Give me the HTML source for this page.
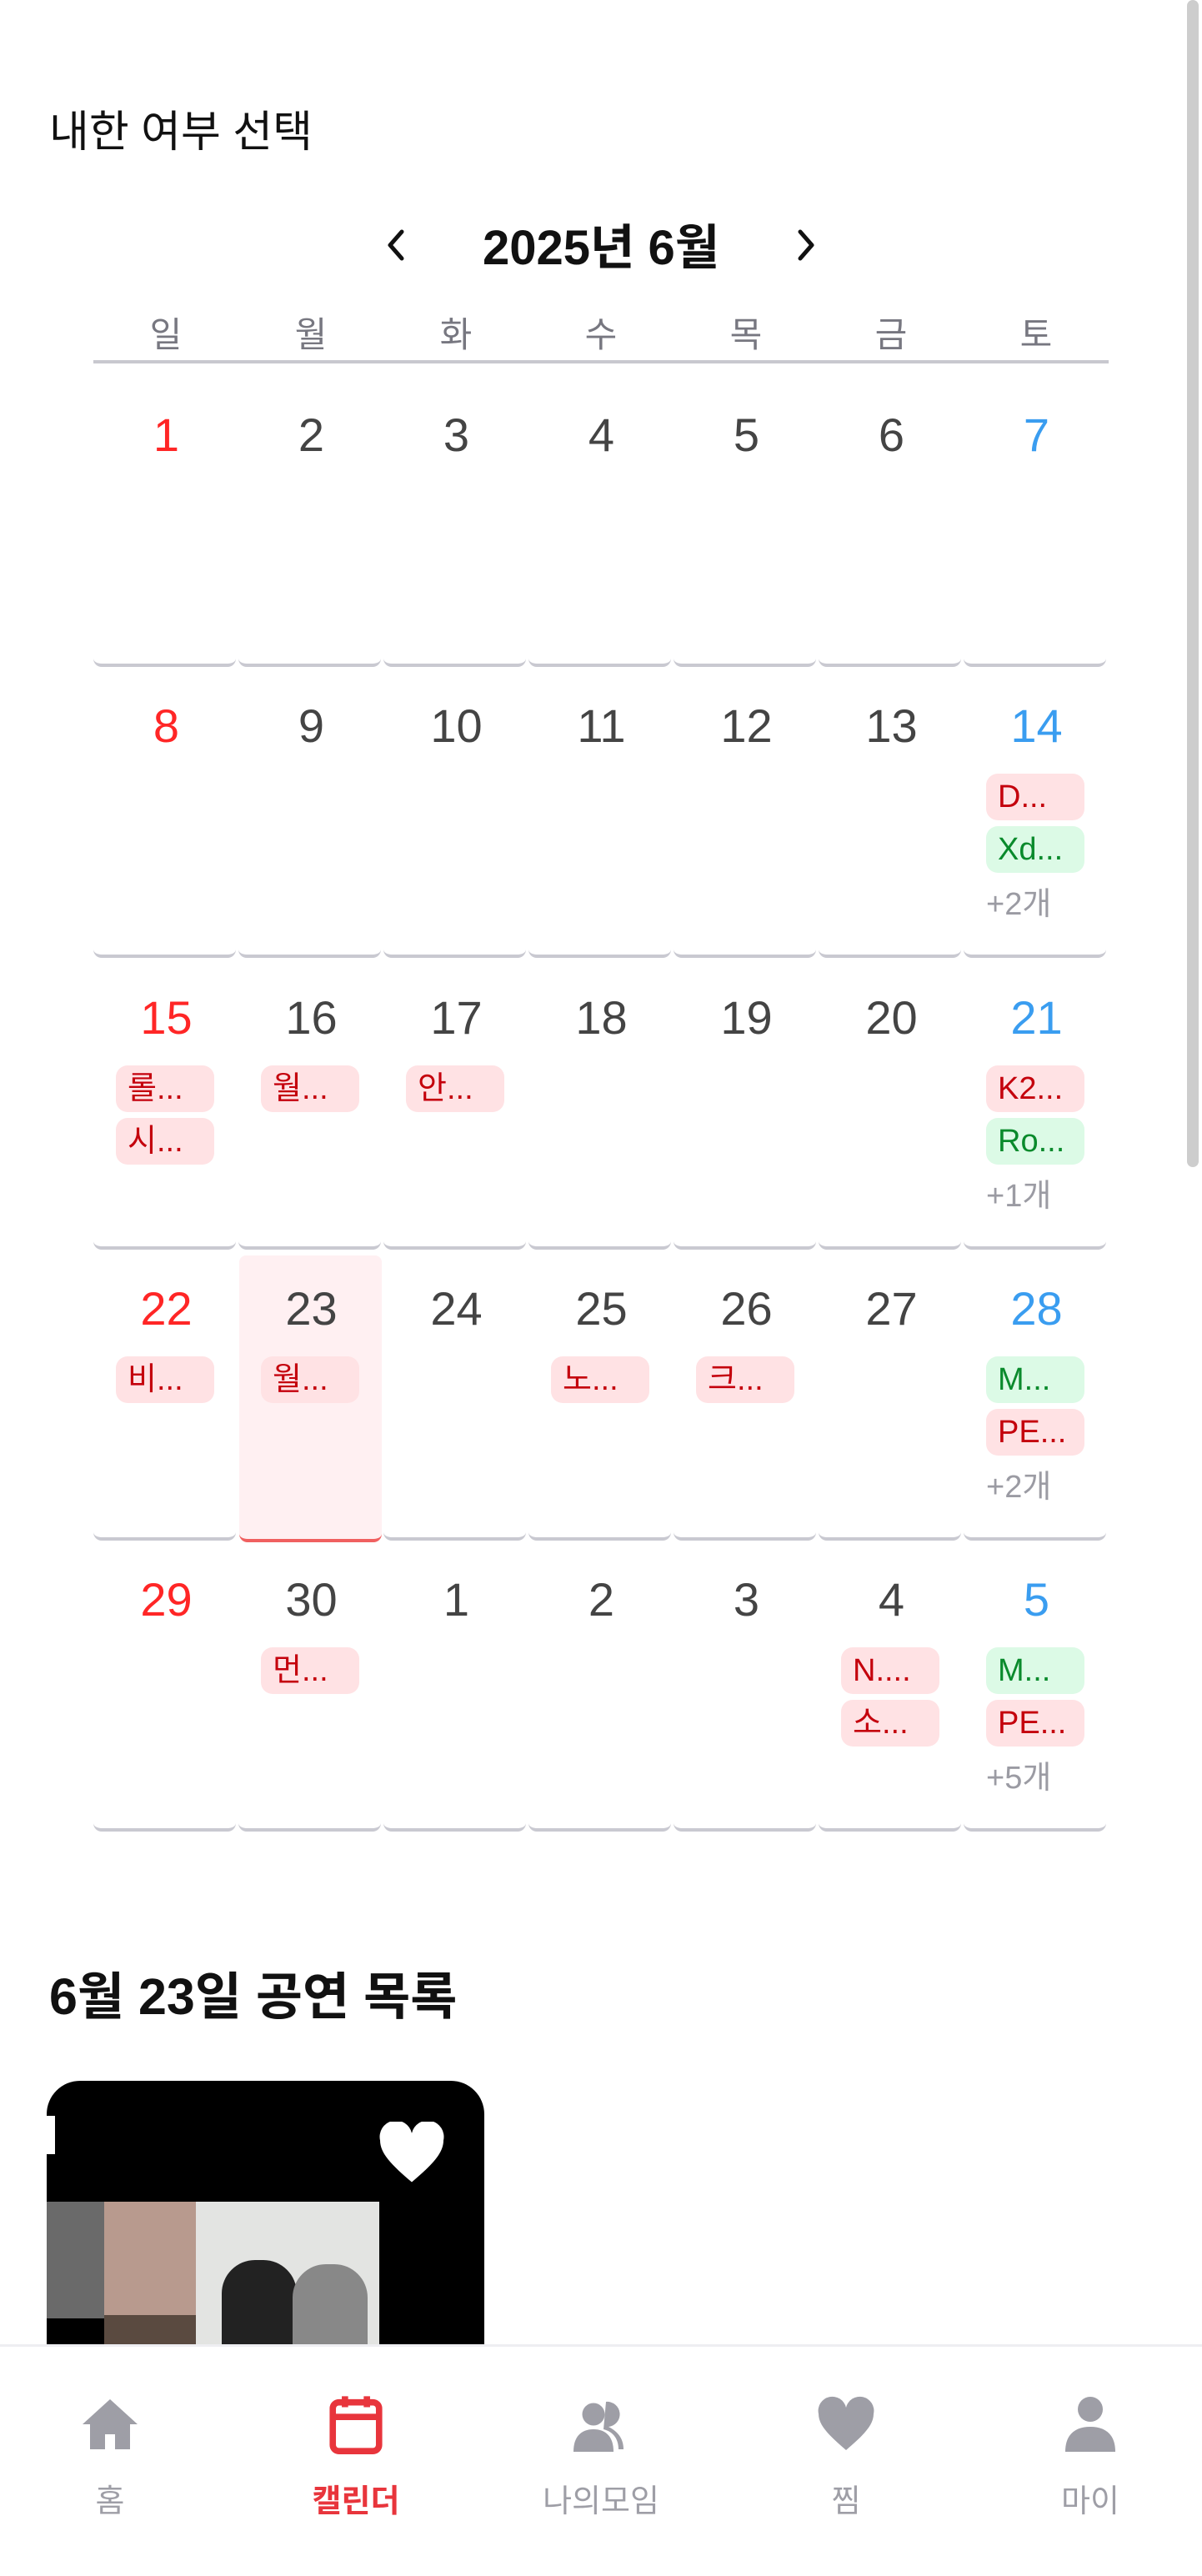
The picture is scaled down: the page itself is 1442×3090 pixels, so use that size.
<!DOCTYPE html>
<html><head><meta charset="utf-8"><style>
*{margin:0;padding:0;box-sizing:border-box}
body{width:1442px;height:3090px;background:#fff;position:relative;overflow:hidden;font-family:"Liberation Sans","Noto Sans CJK KR",sans-serif}
.a{position:absolute}
.title{left:59px;top:116px;font-size:52px;color:#111}
.month{left:0;width:1442px;top:250px;text-align:center;font-size:58px;font-weight:bold;color:#111}
.wd{top:368px;width:174px;text-align:center;font-size:42px;color:#777780}
.cell{width:171px;border-bottom:4px solid #c9c9d1;border-radius:0 0 10px 10px}
.num{width:171px;text-align:center;font-size:56px;color:#444;line-height:60px}
.r{color:#ff2626}.b{color:#3a9df0}
.chip{width:118px;height:56px;border-radius:14px;font-size:38px;line-height:56px;padding-left:14px;white-space:nowrap;overflow:hidden}
.cr{background:#ffe2e4;color:#c4000c}.cg{background:#dcfae6;color:#0a8a2c}
.more{font-size:38px;color:#9b9ba3;line-height:44px}
.nav{top:2812px;left:0;width:1442px;height:278px;background:#fff;border-top:3px solid #eeeef2}
.nl{width:200px;text-align:center;font-size:38px;color:#9e9ea6;top:2969px}
</style></head><body>
<div class="a" style="left:1424px;top:0;width:14px;height:1400px;background:#cdcdcd;border-radius:7px"></div>
<div class="a title">내한 여부 선택</div>
<div class="a month">2025년 6월</div>
<svg class="a" style="left:460px;top:272px" width="30" height="44" viewBox="0 0 30 44"><path d="M22 6 L8 22 L22 38" stroke="#111" stroke-width="5" fill="none" stroke-linecap="round" stroke-linejoin="round"/></svg>
<svg class="a" style="left:952px;top:272px" width="30" height="44" viewBox="0 0 30 44"><path d="M8 6 L22 22 L8 38" stroke="#111" stroke-width="5" fill="none" stroke-linecap="round" stroke-linejoin="round"/></svg>
<div class="a wd" style="left:112px">일</div><div class="a wd" style="left:286px">월</div><div class="a wd" style="left:460px">화</div><div class="a wd" style="left:634px">수</div><div class="a wd" style="left:808px">목</div><div class="a wd" style="left:982px">금</div><div class="a wd" style="left:1156px">토</div>
<div class="a" style="left:112px;top:432px;width:1218px;height:4px;background:#c8c8cf"></div>

<div class="a" style="left:287px;top:1506px;width:171px;height:344px;background:#fff0f2;border-bottom:4px solid #f06060;border-radius:8px 8px 10px 10px"></div>

<div id="g"></div>
<script>
var rows=[
[[1,'r'],[2],[3],[4],[5],[6],[7,'b']],
[[8,'r'],[9],[10],[11],[12],[13],[14,'b',[['D...','r'],['Xd...','g']],'+2개']],
[[15,'r',[['롤...','r'],['시...','r']]],[16,0,[['월...','r']]],[17,0,[['안...','r']]],[18],[19],[20],[21,'b',[['K2...','r'],['Ro...','g']],'+1개']],
[[22,'r',[['비...','r']]],[23,0,[['월...','r']]],[24],[25,0,[['노...','r']]],[26,0,[['크...','r']]],[27],[28,'b',[['M...','g'],['PE...','r']],'+2개']],
[[29,'r'],[30,0,[['먼...','r']]],[1],[2],[3],[4,0,[['N....','r'],['소...','r']]],[5,'b',[['M...','g'],['PE...','r']],'+5개']]
];
var h='';
rows.forEach(function(r,k){var D=522+349.3*k;
r.forEach(function(c,i){var x=112+174*i;
if(!(k==3&&i==1))h+='<div class="a cell" style="left:'+x+'px;top:'+(D-80)+'px;height:'+(358)+'px"></div>';
h+='<div class="a num '+(c[1]||'')+'" style="left:'+(x+2)+'px;top:'+(D-30)+'px">'+c[0]+'</div>';
if(c[2])c[2].forEach(function(ch,j){h+='<div class="a chip c'+ch[1]+'" style="left:'+(x+27)+'px;top:'+(D+57+63*j)+'px">'+ch[0]+'</div>';});
if(c[3])h+='<div class="a more" style="left:'+(x+27)+'px;top:'+(D+192)+'px">'+c[3]+'</div>';
});});
document.getElementById('g').outerHTML=h;
</script>

<div class="a" style="left:59px;top:2345px;font-size:61px;font-weight:bold;color:#111">6월 23일 공연 목록</div>
<div class="a" style="left:56px;top:2496px;width:525px;height:330px;background:#000;border-radius:40px 40px 0 0;overflow:hidden">
 <div class="a" style="left:0;top:42px;width:10px;height:46px;background:#fff"></div>
 <div class="a" style="left:0;top:145px;width:69px;height:140px;background:#6a6a6a"></div>
 <div class="a" style="left:69px;top:145px;width:110px;height:136px;background:#b89a8e"></div>
 <div class="a" style="left:69px;top:281px;width:110px;height:50px;background:#5a4a40"></div>
 <div class="a" style="left:179px;top:145px;width:220px;height:190px;background:#e3e4e2"></div>
 <div class="a" style="left:210px;top:215px;width:90px;height:120px;background:#222;border-radius:40px 40px 0 0"></div>
 <div class="a" style="left:295px;top:220px;width:90px;height:115px;background:#888;border-radius:40px 40px 0 0"></div>
</div>
<svg class="a" style="left:452px;top:2545px" width="84" height="76" viewBox="0 0 24 22"><path d="M12 21 C5 15 1 11 1 6.5 A5.5 5.5 0 0 1 12 4 A5.5 5.5 0 0 1 23 6.5 C23 11 19 15 12 21Z" fill="#fff"/></svg>

<div class="a nav"></div>
<svg class="a" style="left:96px;top:2872px" width="72" height="72" viewBox="0 0 24 24"><path d="M12 2 L23 12 L20 12 L20 22 L14 22 L14 16 L10 16 L10 22 L4 22 L4 12 L1 12Z" fill="#9e9ea6"/></svg>
<svg class="a" style="left:391px;top:2870px" width="72" height="76" viewBox="0 0 24 26"><rect x="2.5" y="4" width="19" height="20" rx="2.5" fill="none" stroke="#e8353c" stroke-width="2.6"/><path d="M2.5 10 H21.5 M7.5 1.5 V6 M16.5 1.5 V6" stroke="#e8353c" stroke-width="2.6"/></svg>
<svg class="a" style="left:684px;top:2872px" width="74" height="72" viewBox="0 0 24 24"><circle cx="9" cy="8" r="4.5" fill="#9e9ea6"/><path d="M1 23 C1 16 5 14 9 14 C13 14 17 16 17 23Z" fill="#9e9ea6"/><path d="M14 3 A5 5 0 0 1 15 13 C19 15 21 18 21 22 L19 22 C19 18 17 15 13 14Z" fill="#9e9ea6"/></svg>
<svg class="a" style="left:979px;top:2874px" width="72" height="70" viewBox="0 0 24 22"><path d="M12 21 C5 15 1 11 1 6.5 A5.5 5.5 0 0 1 12 4 A5.5 5.5 0 0 1 23 6.5 C23 11 19 15 12 21Z" fill="#9e9ea6"/></svg>
<svg class="a" style="left:1272px;top:2872px" width="72" height="72" viewBox="0 0 24 24"><circle cx="12" cy="6" r="5" fill="#9e9ea6"/><path d="M2 23 C2 16 6 13 12 13 C18 13 22 16 22 23Z" fill="#9e9ea6"/></svg>
<div class="a nl" style="left:32px">홈</div>
<div class="a nl" style="left:327px;color:#e8353c;font-weight:bold">캘린더</div>
<div class="a nl" style="left:621px">나의모임</div>
<div class="a nl" style="left:915px">찜</div>
<div class="a nl" style="left:1208px">마이</div>
</body></html>
